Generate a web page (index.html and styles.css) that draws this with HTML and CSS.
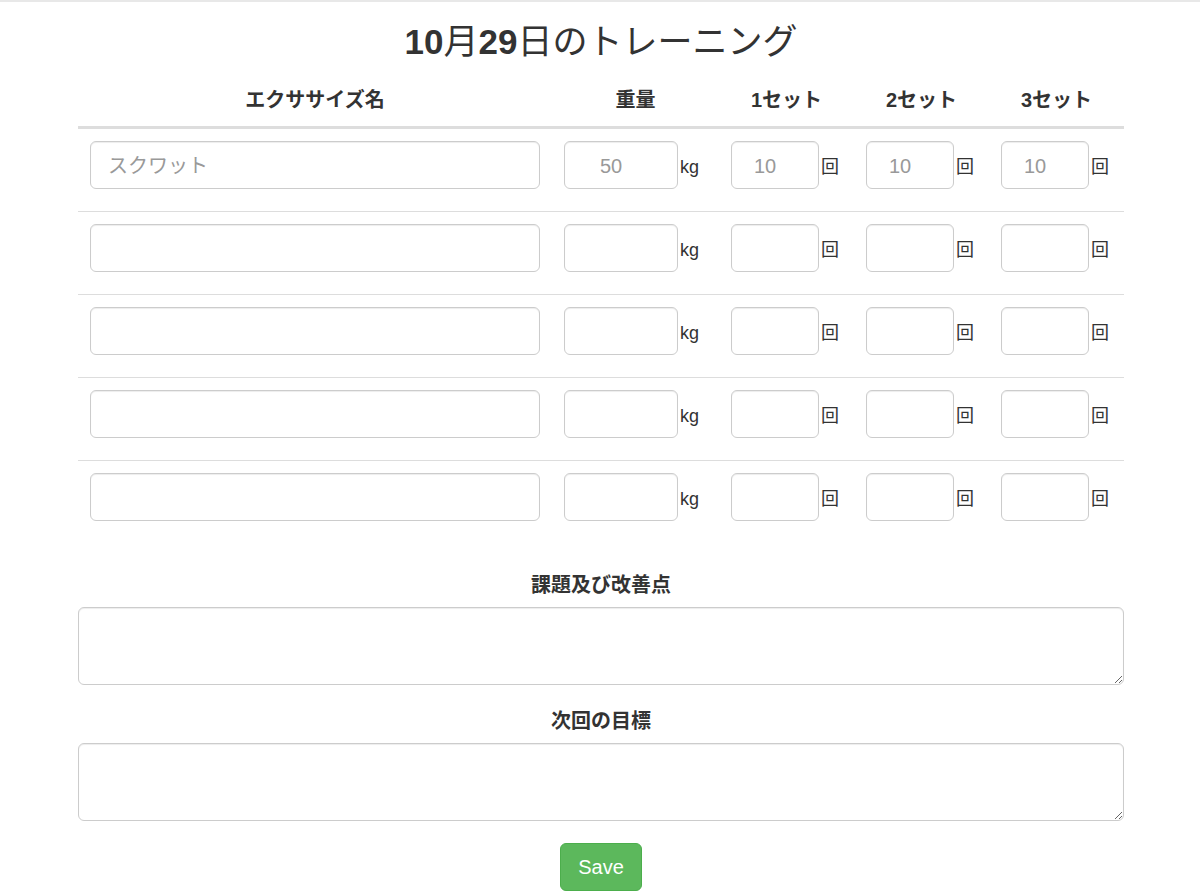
FILE: index.html
```html
<!DOCTYPE html>
<html lang="ja">

<head>
    <meta charset="UTF-8">
    <meta name="viewport" content="width=device-width, initial-scale=1.0">
    <title>トレーニング</title>
    <link rel="stylesheet" href="styles.css">
</head>

<body>
    <div class="container">
        <h1 class="title"><span class="num">10</span>月<span class="num">29</span>日のトレーニング</h1>

        <table class="log">
            <colgroup>
                <col class="col-name">
                <col class="col-weight">
                <col class="col-set">
                <col class="col-set">
                <col class="col-set">
            </colgroup>
            <thead>
                <tr>
                    <th>エクササイズ名</th>
                    <th>重量</th>
                    <th>1セット</th>
                    <th>2セット</th>
                    <th>3セット</th>
                </tr>
            </thead>
            <tbody>
                <tr>
                    <td><div class="field"><input class="form-control name" type="text" placeholder="スクワット"></div></td>
                    <td><div class="field"><input class="form-control weight" type="text" placeholder="50"><span class="unit">kg</span></div></td>
                    <td><div class="field"><input class="form-control reps" type="text" placeholder="10"><span class="unit">回</span></div></td>
                    <td><div class="field"><input class="form-control reps" type="text" placeholder="10"><span class="unit">回</span></div></td>
                    <td><div class="field"><input class="form-control reps" type="text" placeholder="10"><span class="unit">回</span></div></td>
                </tr>
                <tr>
                    <td><div class="field"><input class="form-control name" type="text"></div></td>
                    <td><div class="field"><input class="form-control weight" type="text"><span class="unit">kg</span></div></td>
                    <td><div class="field"><input class="form-control reps" type="text"><span class="unit">回</span></div></td>
                    <td><div class="field"><input class="form-control reps" type="text"><span class="unit">回</span></div></td>
                    <td><div class="field"><input class="form-control reps" type="text"><span class="unit">回</span></div></td>
                </tr>
                <tr>
                    <td><div class="field"><input class="form-control name" type="text"></div></td>
                    <td><div class="field"><input class="form-control weight" type="text"><span class="unit">kg</span></div></td>
                    <td><div class="field"><input class="form-control reps" type="text"><span class="unit">回</span></div></td>
                    <td><div class="field"><input class="form-control reps" type="text"><span class="unit">回</span></div></td>
                    <td><div class="field"><input class="form-control reps" type="text"><span class="unit">回</span></div></td>
                </tr>
                <tr>
                    <td><div class="field"><input class="form-control name" type="text"></div></td>
                    <td><div class="field"><input class="form-control weight" type="text"><span class="unit">kg</span></div></td>
                    <td><div class="field"><input class="form-control reps" type="text"><span class="unit">回</span></div></td>
                    <td><div class="field"><input class="form-control reps" type="text"><span class="unit">回</span></div></td>
                    <td><div class="field"><input class="form-control reps" type="text"><span class="unit">回</span></div></td>
                </tr>
                <tr>
                    <td><div class="field"><input class="form-control name" type="text"></div></td>
                    <td><div class="field"><input class="form-control weight" type="text"><span class="unit">kg</span></div></td>
                    <td><div class="field"><input class="form-control reps" type="text"><span class="unit">回</span></div></td>
                    <td><div class="field"><input class="form-control reps" type="text"><span class="unit">回</span></div></td>
                    <td><div class="field"><input class="form-control reps" type="text"><span class="unit">回</span></div></td>
                </tr>
            </tbody>
        </table>

        <div class="form-group">
            <label class="label">課題及び改善点</label>
            <textarea class="form-control note"></textarea>
        </div>

        <div class="form-group">
            <label class="label">次回の目標</label>
            <textarea class="form-control note"></textarea>
        </div>

        <div class="actions">
            <button class="btn-save" type="button">Save</button>
        </div>
    </div>
</body>

</html>
```

FILE: styles.css
```css
* {
    margin: 0;
    padding: 0;
    box-sizing: border-box;
}

body {
    font-family: "Liberation Sans", "Noto Sans CJK JP", sans-serif;
    color: #333;
    background: #fff;
    border-top: 2px solid #e8e8e8;
    padding-left: 2px;
}

.container {
    width: 1046px;
    margin: 0 auto;
    padding-top: 21px;
}

.title {
    font-size: 35px;
    font-weight: normal;
    line-height: 38px;
    text-align: center;
    margin-bottom: 9px;
}

.title .num {
    font-weight: bold;
}

/* table */
.log {
    width: 100%;
    table-layout: fixed;
    border-collapse: separate;
    border-spacing: 0;
    margin-bottom: 28px;
}

.col-name {
    width: 474px;
}

.col-weight {
    width: 167px;
}

.col-set {
    width: 135px;
}

.log th {
    font-size: 20px;
    font-weight: bold;
    line-height: 28px;
    text-align: center;
    padding: 16px 12px 12px;
    border-bottom: 3px solid #ddd;
}

.log td {
    vertical-align: top;
    padding: 12px 12px 22px;
    border-top: 1px solid #ddd;
}

.log tbody tr:first-child td {
    border-top: 0;
}

.field {
    display: flex;
    align-items: baseline;
    height: 48px;
}

.unit {
    font-size: 18px;
    line-height: 20px;
    margin-left: 2px;
}

/* inputs */
.form-control {
    height: 48px;
    font-family: inherit;
    font-size: 20px;
    color: #555;
    background: #fff;
    border: 1px solid #ccc;
    border-radius: 6px;
    box-shadow: inset 0 1px 1px rgba(0, 0, 0, .075);
    padding: 3px 17px 0;
    outline: none;
}

.form-control::placeholder {
    color: #999;
}

.name {
    width: 450px;
}

.weight {
    width: 114px;
    text-align: center;
    padding-left: 6px;
    padding-right: 26px;
}

.reps {
    width: 88px;
    text-align: center;
    padding-left: 6px;
    padding-right: 26px;
}

.form-group {
    margin-bottom: 22px;
}

.label {
    display: block;
    font-size: 20px;
    font-weight: bold;
    line-height: 28px;
    text-align: center;
    margin-bottom: 8px;
}

.note {
    display: block;
    width: 100%;
    height: 78px;
    padding: 8px 17px;
}

.actions {
    text-align: center;
}

.btn-save {
    width: 82px;
    height: 48px;
    font-family: "Liberation Sans", sans-serif;
    font-size: 20px;
    color: #fff;
    background: #5cb85c;
    border: 1px solid #4cae4c;
    border-radius: 6px;
    cursor: pointer;
}
```
